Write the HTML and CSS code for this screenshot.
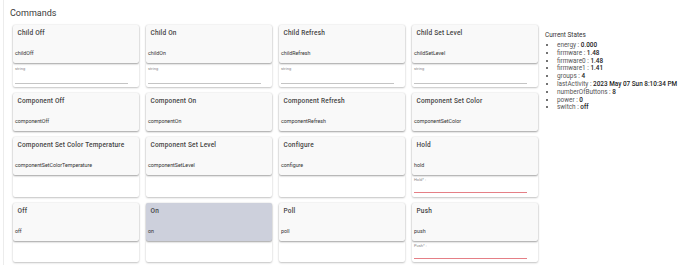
FILE: index.html
```html
<!DOCTYPE html>
<html>
<head>
<meta charset="utf-8">
<link rel="stylesheet" href="styles.css">
</head>
<body>
<div class="page">
  <div class="heading">Commands</div>
  <div class="layout">
    <div class="grid">
      <div class="card">
        <div class="head"><div class="name">Child Off</div><div class="cmd">childOff</div></div>
        <div class="field tall"><div class="label">string</div><div class="line"></div></div>
      </div>
      <div class="card">
        <div class="head"><div class="name">Child On</div><div class="cmd">childOn</div></div>
        <div class="field tall"><div class="label">string</div><div class="line"></div></div>
      </div>
      <div class="card">
        <div class="head"><div class="name">Child Refresh</div><div class="cmd">childRefresh</div></div>
        <div class="field tall"><div class="label">string</div><div class="line"></div></div>
      </div>
      <div class="card">
        <div class="head"><div class="name">Child Set Level</div><div class="cmd">childSetLevel</div></div>
        <div class="field tall"><div class="label">string</div><div class="line"></div></div>
      </div>

      <div class="card">
        <div class="head"><div class="name">Component Off</div><div class="cmd">componentOff</div></div>
      </div>
      <div class="card">
        <div class="head"><div class="name">Component On</div><div class="cmd">componentOn</div></div>
      </div>
      <div class="card">
        <div class="head"><div class="name">Component Refresh</div><div class="cmd">componentRefresh</div></div>
      </div>
      <div class="card">
        <div class="head"><div class="name">Component Set Color</div><div class="cmd">componentSetColor</div></div>
      </div>

      <div class="card">
        <div class="head"><div class="name">Component Set Color Temperature</div><div class="cmd">componentSetColorTemperature</div></div>
        <div class="field"></div>
      </div>
      <div class="card">
        <div class="head"><div class="name">Component Set Level</div><div class="cmd">componentSetLevel</div></div>
        <div class="field"></div>
      </div>
      <div class="card">
        <div class="head"><div class="name">Configure</div><div class="cmd">configure</div></div>
        <div class="field"></div>
      </div>
      <div class="card">
        <div class="head"><div class="name">Hold</div><div class="cmd">hold</div></div>
        <div class="field"><div class="label">Hold* :</div><div class="line req"></div></div>
      </div>

      <div class="card">
        <div class="head"><div class="name">Off</div><div class="cmd">off</div></div>
        <div class="field short"></div>
      </div>
      <div class="card">
        <div class="head active"><div class="name">On</div><div class="cmd">on</div></div>
        <div class="field short"></div>
      </div>
      <div class="card">
        <div class="head"><div class="name">Poll</div><div class="cmd">poll</div></div>
        <div class="field short"></div>
      </div>
      <div class="card">
        <div class="head"><div class="name">Push</div><div class="cmd">push</div></div>
        <div class="field short"><div class="label">Push* :</div><div class="line req"></div></div>
      </div>
    </div>

    <div class="states">
      <div class="states-title">Current States</div>
      <ul class="state-list">
        <li><span class="k">energy</span> : <span class="v">0.000</span></li>
        <li><span class="k">firmware</span> : <span class="v">1.48</span></li>
        <li><span class="k">firmware0</span> : <span class="v">1.48</span></li>
        <li><span class="k">firmware1</span> : <span class="v">1.41</span></li>
        <li><span class="k">groups</span> : <span class="v">4</span></li>
        <li><span class="k">lastActivity</span> : <span class="v">2023 May 07 Sun 8:10:34 PM</span></li>
        <li><span class="k">numberOfButtons</span> : <span class="v">8</span></li>
        <li><span class="k">power</span> : <span class="v">0</span></li>
        <li><span class="k">switch</span> : <span class="v">off</span></li>
      </ul>
    </div>
  </div>
</div>
</body>
</html>
```

FILE: styles.css
```css
html, body {
  margin: 0;
  padding: 0;
  background: #ffffff;
  font-family: Roboto, "Liberation Sans", sans-serif;
  color: #333;
}

.page {
  margin-left: 3px;
  border-left: 1px solid #ececec;
  height: 265px;
  box-sizing: border-box;
  padding-left: 9px;
}

.heading {
  font-size: 9px;
  line-height: 10px;
  color: #3a3a3a;
  padding-top: 8px;
  margin-left: -3px;
}

.layout {
  display: flex;
  gap: 7px;
  margin-top: 7px;
}

.grid {
  display: grid;
  grid-template-columns: repeat(4, 126px);
  column-gap: 7px;
  row-gap: 6px;
  align-items: start;
}

.card {
  display: flex;
  flex-direction: column;
}

.head {
  height: 38px;
  box-sizing: border-box;
  background: #f9f9f9;
  border-radius: 2px;
  box-shadow: 0 1px 2px rgba(0,0,0,0.35), 0 0 2px rgba(0,0,0,0.12);
  padding: 4px 2px 0 2px;
  position: relative;
  z-index: 1;
}

.head.active {
  background: #cdd0dc;
}

.name {
  font-size: 6.5px;
  line-height: 8px;
  font-weight: 500;
  letter-spacing: 0.2px;
  color: #444;
  padding-left: 2.5px;
}

.cmd {
  font-size: 5.3px;
  line-height: 6px;
  color: #333;
  margin-top: 13px;
}

.field {
  height: 22px;
  box-sizing: border-box;
  background: #fff;
  box-shadow: 0 1px 2px rgba(0,0,0,0.22), 0 0 2px rgba(0,0,0,0.08);
  border-radius: 0 0 2px 2px;
  padding: 2px 11px 0 2px;
}

.field.tall {
  height: 24px;
  padding-top: 3px;
}

.field.short {
  height: 21px;
}

.label {
  font-size: 4px;
  line-height: 5px;
  color: #888;
}

.line {
  height: 1px;
  background: #c4c4c4;
  margin-top: 12px;
}

.line.req {
  background: #e57f86;
  height: 1.3px;
  margin-top: 10px;
}

.states {
  padding-top: 6px;
}

.states-title {
  font-size: 6.4px;
  line-height: 8px;
  color: #333;
}

.state-list {
  margin: 3px 0 0 0;
  padding-left: 12px;
  font-size: 6.4px;
  line-height: 7.8px;
}

.state-list li {
  color: #444;
}

.k {
  color: #555;
}

.v {
  color: #222;
  font-weight: 500;
}
```
